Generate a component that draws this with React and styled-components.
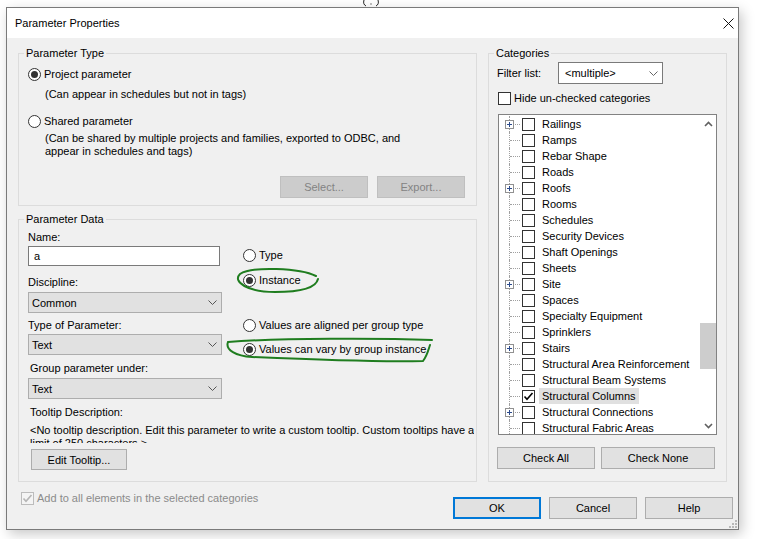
import React from "react";
import styled, { createGlobalStyle, css } from "styled-components";

const Global = createGlobalStyle`
  html, body { margin: 0; padding: 0; background: #ffffff; }
  body {
    font-family: "Liberation Sans", Arial, sans-serif;
    font-size: 11px;
    color: #000;
  }
  * { box-sizing: border-box; }
`;

const Page = styled.div`
  position: relative;
  width: 766px;
  height: 539px;
  padding: 7px 0 0 6px;
  overflow: hidden;
`;

const Dialog = styled.div`
  width: 733px;
  height: 523px;
  border: 1px solid #7a7a7a;
  display: flex;
  flex-direction: column;
  background: #f0f0f0;
  box-shadow: 3px 4px 12px rgba(0, 0, 0, 0.22);
`;

const TitleBar = styled.div`
  height: 30px;
  flex: none;
  background: #fff;
  display: flex;
  align-items: center;
  justify-content: space-between;
  padding-left: 8px;
`;

const Title = styled.span`
  white-space: nowrap;
`;

const CloseBtn = styled.div`
  width: 20px;
  height: 30px;
  display: flex;
  align-items: center;
  justify-content: center;
`;

const Body = styled.div`
  flex: 1;
  position: relative;
  padding: 8px 5px 0 11px;
`;

const Columns = styled.div`
  display: grid;
  grid-template-columns: 459px 239px;
  column-gap: 11px;
  height: 436px;
`;

const LeftColumn = styled.div`
  display: flex;
  flex-direction: column;
  gap: 6px;
`;

const GroupBox = styled.fieldset`
  margin: 0;
  min-width: 0;
  border: 1px solid #dcdcdc;
  padding: 0 ${(p) => p.$pr}px 0 ${(p) => p.$pl}px;
  height: ${(p) => p.$h}px;
`;

const Legend = styled.legend`
  padding: 0 2px;
  margin-left: ${(p) => p.$ml}px;
  line-height: 14px;
  white-space: nowrap;
`;

const RadioRow = styled.div`
  display: flex;
  align-items: center;
  gap: 3px;
  height: 16px;
  margin-top: ${(p) => p.$mt || 0}px;
  white-space: nowrap;
`;

const RadioCircle = styled.span`
  width: 13px;
  height: 13px;
  flex: none;
  border-radius: 50%;
  border: 1px solid #333;
  background: #fff;
  display: flex;
  align-items: center;
  justify-content: center;
  ${(p) =>
    p.$checked &&
    css`
      &::after {
        content: "";
        width: 7px;
        height: 7px;
        border-radius: 50%;
        background: #333;
      }
    `}
`;

const Desc = styled.div`
  padding-left: 17px;
  line-height: 13px;
  margin-top: ${(p) => p.$mt || 0}px;
  white-space: nowrap;
`;

const ButtonRow = styled.div`
  display: flex;
  justify-content: ${(p) => p.$justify || "flex-end"};
  gap: ${(p) => p.$gap}px;
  margin-top: ${(p) => p.$mt || 0}px;
`;

const Button = styled.div`
  width: ${(p) => p.$w || 88}px;
  height: ${(p) => p.$h || 22}px;
  flex: none;
  display: flex;
  align-items: center;
  justify-content: center;
  background: #e1e1e1;
  border: 1px solid #adadad;
  color: #000;
  margin-left: ${(p) => p.$ml || 0}px;
  margin-top: ${(p) => p.$mt || 0}px;
  white-space: nowrap;
  ${(p) =>
    p.$disabled &&
    css`
      background: #cccccc;
      border-color: #bfbfbf;
      color: #838383;
    `}
  ${(p) =>
    p.$default &&
    css`
      border: 2px solid #0078d7;
    `}
`;

const DataColumns = styled.div`
  display: flex;
  align-items: flex-start;
  gap: 21px;
`;

const FieldColumn = styled.div`
  width: 194px;
  display: flex;
  flex-direction: column;
`;

const OptionColumn = styled.div`
  display: flex;
  flex-direction: column;
`;

const Label = styled.div`
  line-height: 14px;
  height: 14px;
  margin-top: ${(p) => p.$mt || 0}px;
  padding-left: ${(p) => p.$pl || 0}px;
  white-space: nowrap;
`;

const TextInput = styled.div`
  width: 192px;
  height: 20px;
  margin-top: ${(p) => p.$mt || 0}px;
  border: 1px solid #7a7a7a;
  background: #fff;
  display: flex;
  align-items: center;
  padding-left: 5px;
`;

const Combo = styled.div`
  width: ${(p) => p.$w}px;
  height: ${(p) => p.$h}px;
  margin-top: ${(p) => p.$mt || 0}px;
  display: flex;
  align-items: center;
  justify-content: space-between;
  padding: 0 4px 0 ${(p) => p.$pl}px;
  white-space: nowrap;
  ${(p) =>
    p.$white
      ? css`
          background: #fff;
          border: 1px solid #7a7a7a;
        `
      : css`
          background: #e1e1e1;
          border: 1px solid #adadad;
        `}
`;

const TooltipText = styled.div`
  margin-top: 5px;
  height: 19px;
  overflow: hidden;
  line-height: 13px;
  padding-left: 2px;
  white-space: nowrap;
`;

const FilterRow = styled.div`
  display: flex;
  align-items: center;
  height: 22px;
  margin-top: 2px;
`;

const FilterLabel = styled.span`
  width: 61px;
  flex: none;
  white-space: nowrap;
`;

const CheckRow = styled.div`
  display: flex;
  align-items: center;
  gap: 3px;
  height: 14px;
  margin-top: ${(p) => p.$mt || 0}px;
  margin-left: ${(p) => p.$ml || 0}px;
  white-space: nowrap;
  color: ${(p) => (p.$disabled ? "#8b8b8b" : "#000")};
`;

const CheckBox = styled.span`
  width: 13px;
  height: 13px;
  flex: none;
  border: 1px solid ${(p) => (p.$disabled ? "#bcbcbc" : "#333")};
  background: ${(p) => (p.$disabled ? "#f4f4f4" : "#fff")};
  display: flex;
  align-items: center;
  justify-content: center;
`;

const Tree = styled.div`
  width: 219px;
  height: 321px;
  margin: 9px 0 0 1px;
  border: 1px solid #828282;
  background: #fff;
  display: flex;
`;

const TreeRows = styled.div`
  flex: 1;
  min-width: 0;
  overflow: hidden;
  padding-top: 1px;
  display: flex;
  flex-direction: column;
`;

const TreeRow = styled.div`
  display: flex;
  align-items: center;
  height: 16px;
  flex: none;
`;

const Gutter = styled.span`
  position: relative;
  width: 23px;
  height: 16px;
  flex: none;
  &::before {
    content: "";
    position: absolute;
    left: 10px;
    top: 0;
    height: 16px;
    border-left: 1px dotted #a0a0a0;
  }
  &::after {
    content: "";
    position: absolute;
    left: 11px;
    top: 8px;
    width: 10px;
    border-top: 1px dotted #a0a0a0;
  }
`;

const PlusBox = styled.span`
  position: absolute;
  left: 6px;
  top: 4px;
  width: 9px;
  height: 9px;
  border: 1px solid #919191;
  background: #fff;
  z-index: 1;
  display: flex;
  align-items: center;
  justify-content: center;
`;

const TreeLabel = styled.span`
  margin-left: 4px;
  padding: 0 3px;
  line-height: 16px;
  white-space: nowrap;
  background: ${(p) => (p.$selected ? "#e0e0e0" : "transparent")};
`;

const ScrollBar = styled.div`
  width: 16px;
  flex: none;
  display: flex;
  flex-direction: column;
  background: #fff;
`;

const ScrollArrow = styled.div`
  height: 17px;
  flex: none;
  display: flex;
  align-items: center;
  justify-content: center;
`;

const ScrollTrack = styled.div`
  flex: 1;
`;

const Thumb = styled.div`
  margin-top: 191px;
  height: 46px;
  background: #cdcdcd;
`;

const BottomBar = styled.div`
  display: flex;
  justify-content: space-between;
  align-items: flex-start;
  padding-top: 9px;
`;

const Grip = styled.svg`
  position: absolute;
  right: 1px;
  bottom: 1px;
`;

const Overlay = styled.svg`
  position: absolute;
  left: 0;
  top: 0;
  pointer-events: none;
`;

const Chevron = ({ color = "#555" }) => (
  <svg width="9" height="5" viewBox="0 0 9 5">
    <polyline points="0.5,0.5 4.5,4.5 8.5,0.5" fill="none" stroke={color} strokeWidth="1" />
  </svg>
);

const Tick = ({ color = "#000" }) => (
  <svg width="11" height="11" viewBox="0 0 11 11">
    <polyline points="1.5,5.5 4,8.3 9.5,2" fill="none" stroke={color} strokeWidth="1.6" />
  </svg>
);

const Radio = ({ checked, children, mt }) => (
  <RadioRow $mt={mt}>
    <RadioCircle $checked={checked} />
    <span>{children}</span>
  </RadioRow>
);

const categories = [
  { name: "Railings", plus: true },
  { name: "Ramps" },
  { name: "Rebar Shape" },
  { name: "Roads" },
  { name: "Roofs", plus: true },
  { name: "Rooms" },
  { name: "Schedules" },
  { name: "Security Devices" },
  { name: "Shaft Openings" },
  { name: "Sheets" },
  { name: "Site", plus: true },
  { name: "Spaces" },
  { name: "Specialty Equipment" },
  { name: "Sprinklers" },
  { name: "Stairs", plus: true },
  { name: "Structural Area Reinforcement" },
  { name: "Structural Beam Systems" },
  { name: "Structural Columns", checked: true, selected: true },
  { name: "Structural Connections", plus: true },
  { name: "Structural Fabric Areas" },
];

export default function App() {
  return (
    <>
      <Global />
      <Page>
        <Dialog>
          <TitleBar>
            <Title>Parameter Properties</Title>
            <CloseBtn>
              <svg width="11" height="11" viewBox="0 0 11 11">
                <path d="M0.5 0.5 L10.5 10.5 M10.5 0.5 L0.5 10.5" stroke="#111" strokeWidth="1" />
              </svg>
            </CloseBtn>
          </TitleBar>
          <Body>
            <Columns>
              <LeftColumn>
                <GroupBox $h={160} $pl={9} $pr={11}>
                  <Legend $ml={-4}>Parameter Type</Legend>
                  <Radio checked mt={6}>Project parameter</Radio>
                  <Desc $mt={6}>(Can appear in schedules but not in tags)</Desc>
                  <Radio mt={12}>Shared parameter</Radio>
                  <Desc $mt={3}>
                    (Can be shared by multiple projects and families, exported to ODBC, and
                    <br />
                    appear in schedules and tags)
                  </Desc>
                  <ButtonRow $gap={9} $mt={18}>
                    <Button $disabled>Select...</Button>
                    <Button $disabled>Export...</Button>
                  </ButtonRow>
                </GroupBox>
                <GroupBox $h={270} $pl={9} $pr={2}>
                  <Legend $ml={-4}>Parameter Data</Legend>
                  <DataColumns>
                    <FieldColumn>
                      <Label $mt={4}>Name:</Label>
                      <TextInput $mt={2}>a</TextInput>
                      <Label $mt={9}>Discipline:</Label>
                      <Combo $w={194} $h={21} $mt={3} $pl={3}>
                        <span>Common</span>
                        <Chevron />
                      </Combo>
                      <Label $mt={5}>Type of Parameter:</Label>
                      <Combo $w={194} $h={21} $mt={2} $pl={3}>
                        <span>Text</span>
                        <Chevron />
                      </Combo>
                      <Label $mt={6} $pl={2}>Group parameter under:</Label>
                      <Combo $w={194} $h={21} $mt={3} $pl={3}>
                        <span>Text</span>
                        <Chevron />
                      </Combo>
                    </FieldColumn>
                    <OptionColumn>
                      <Radio mt={21}>Type</Radio>
                      <Radio checked mt={9}>Instance</Radio>
                      <Radio mt={29}>Values are aligned per group type</Radio>
                      <Radio checked mt={8}>Values can vary by group instance</Radio>
                    </OptionColumn>
                  </DataColumns>
                  <Label $mt={6} $pl={2}>Tooltip Description:</Label>
                  <TooltipText>
                    &lt;No tooltip description. Edit this parameter to write a custom tooltip. Custom tooltips have a
                    <br />
                    limit of 250 characters.&gt;
                  </TooltipText>
                  <Button $w={96} $h={21} $ml={3} $mt={6}>Edit Tooltip...</Button>
                </GroupBox>
              </LeftColumn>
              <GroupBox $h={436} $pl={8} $pr={9}>
                <Legend $ml={-3}>Categories</Legend>
                <FilterRow>
                  <FilterLabel>Filter list:</FilterLabel>
                  <Combo $w={105} $h={22} $pl={6} $white>
                    <span>&lt;multiple&gt;</span>
                    <Chevron color="#666" />
                  </Combo>
                </FilterRow>
                <CheckRow $mt={7} $ml={1}>
                  <CheckBox />
                  <span>Hide un-checked categories</span>
                </CheckRow>
                <Tree>
                  <TreeRows>
                    {categories.map((c) => (
                      <TreeRow key={c.name}>
                        <Gutter>
                          {c.plus && (
                            <PlusBox>
                              <svg width="7" height="7" viewBox="0 0 7 7">
                                <path d="M1 3.5 H6 M3.5 1 V6" stroke="#2b4a8c" strokeWidth="1" />
                              </svg>
                            </PlusBox>
                          )}
                        </Gutter>
                        <CheckBox>{c.checked && <Tick />}</CheckBox>
                        <TreeLabel $selected={c.selected}>{c.name}</TreeLabel>
                      </TreeRow>
                    ))}
                  </TreeRows>
                  <ScrollBar>
                    <ScrollArrow>
                      <svg width="9" height="6" viewBox="0 0 9 6">
                        <polyline points="1,5 4.5,1.5 8,5" fill="none" stroke="#606060" strokeWidth="1.6" />
                      </svg>
                    </ScrollArrow>
                    <ScrollTrack>
                      <Thumb />
                    </ScrollTrack>
                    <ScrollArrow>
                      <svg width="9" height="6" viewBox="0 0 9 6">
                        <polyline points="1,1 4.5,4.5 8,1" fill="none" stroke="#606060" strokeWidth="1.6" />
                      </svg>
                    </ScrollArrow>
                  </ScrollBar>
                </Tree>
                <ButtonRow $gap={6} $mt={12} $justify="flex-start">
                  <Button $w={98}>Check All</Button>
                  <Button $w={114}>Check None</Button>
                </ButtonRow>
              </GroupBox>
            </Columns>
            <BottomBar>
              <CheckRow $ml={3} $disabled>
                <CheckBox $disabled>
                  <Tick color="#b5b5b5" />
                </CheckBox>
                <span>Add to all elements in the selected categories</span>
              </CheckRow>
              <ButtonRow $gap={8} $mt={6}>
                <Button $default>OK</Button>
                <Button>Cancel</Button>
                <Button>Help</Button>
              </ButtonRow>
            </BottomBar>
            <Grip width="9" height="9" viewBox="0 0 9 9">
              {[
                [7, 1], [7, 4], [4, 4], [7, 7], [4, 7], [1, 7],
              ].map(([x, y]) => (
                <rect key={`${x}-${y}`} x={x} y={y} width="2" height="2" fill="#b8b8b8" />
              ))}
            </Grip>
          </Body>
        </Dialog>
        <Overlay width="766" height="539" viewBox="0 0 766 539">
          <path
            d="M364 0 C 363 3, 364 5, 366 6 M378 0 C 379 3, 378 5, 376 6"
            fill="none"
            stroke="#222"
            strokeWidth="1"
          />
          <rect x="370" y="3" width="2" height="2" fill="#bbb" />
          <path
            d="M316 276 C 300 268, 252 266, 240 274 C 232 282, 248 292, 275 292 C 300 292, 316 288, 318 279"
            fill="none"
            stroke="#1f7d1f"
            strokeWidth="2"
            strokeLinecap="round"
          />
          <path
            d="M432 340 C 380 338, 280 338, 228 342 C 225 350, 236 356, 252 357 C 320 360, 390 362, 423 361 C 427 356, 428 351, 430 345"
            fill="none"
            stroke="#1f7d1f"
            strokeWidth="2"
            strokeLinecap="round"
          />
        </Overlay>
      </Page>
    </>
  );
}
